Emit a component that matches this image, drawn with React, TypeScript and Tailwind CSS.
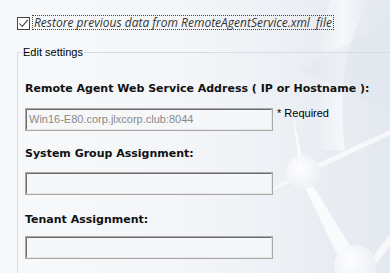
import React from "react";

const labelCls =
  "text-[11px] leading-[13px] font-bold text-[#111] whitespace-nowrap";

function Field({ value, disabled }: { value?: string; disabled?: boolean }) {
  return (
    <div className="w-[248px] h-[23px] border border-[#a9a9a9] bg-[#f6f7f9]">
      <div className="w-full h-full border-t border-l border-[#6d6d6d] border-r-[#e6e6e6] border-b-[#e6e6e6] border-r border-b flex items-center pl-[2px]">
        <span
          className={`text-[11px] leading-[13px] ${disabled ? "text-[#8a8a8a]" : "text-black"}`}
          style={{ fontFamily: '"Liberation Sans", Arial, sans-serif' }}
        >
          {value}
        </span>
      </div>
    </div>
  );
}

export default function App() {
  return (
    <div
      className="relative w-[390px] h-[273px] overflow-hidden bg-gradient-to-r from-[#f8f9fa] via-[#f3f5f8] to-[#e4e9f0]"
      style={{ fontFamily: '"DejaVu Sans", Verdana, sans-serif' }}
    >
      {/* background decoration */}
      <svg
        className="absolute inset-0 pointer-events-none"
        width="390"
        height="273"
        viewBox="0 0 390 273"
      >
        <defs>
          <radialGradient id="ball" cx="40%" cy="40%" r="60%">
            <stop offset="0%" stopColor="#ffffff" />
            <stop offset="100%" stopColor="#eef1f5" />
          </radialGradient>
          <linearGradient id="sheen" x1="0" y1="0" x2="1" y2="0">
            <stop offset="0%" stopColor="#ffffff" stopOpacity="0" />
            <stop offset="50%" stopColor="#ffffff" stopOpacity="0.6" />
            <stop offset="100%" stopColor="#ffffff" stopOpacity="0" />
          </linearGradient>
        </defs>
        <path d="M330 0 C 318 40, 312 90, 318 150 L 345 150 C 338 90, 345 40, 370 0 Z" fill="url(#sheen)" />
        <path d="M390 20 L 300 70 L 390 110 Z" fill="#dfe5ed" opacity="0.4" />
        <path d="M292 110 L 300 172 L 305 172 Z" fill="#ffffff" opacity="0.75" />
        <path d="M301 180 L 341 262 L 354 252 L 308 178 Z" fill="#ffffff" opacity="0.75" />
        <path d="M312 166 L 390 130 L 390 135 L 314 171 Z" fill="#ffffff" opacity="0.65" />
        <path d="M291 178 L 272 188 L 272 191 L 293 181 Z" fill="#ffffff" opacity="0.5" />
        <path d="M372 258 L 390 234 L 390 246 L 376 264 Z" fill="#ffffff" opacity="0.65" />
        <circle cx="303" cy="172" r="17" fill="url(#ball)" opacity="0.9" />
        <circle cx="355" cy="266" r="21" fill="url(#ball)" opacity="0.9" />
      </svg>

      <div className="relative pt-[15px] pl-[17px]">
        {/* restore checkbox */}
        <div className="flex items-start">
          <div className="mt-[2px] w-[13px] h-[13px] border border-[#444] bg-white flex items-center justify-center">
            <svg width="11" height="11" viewBox="0 0 11 11">
              <path d="M1.5 5.5 L4.2 8.5 L9.8 1.8" fill="none" stroke="#333" strokeWidth="1.1" />
            </svg>
          </div>
          <div
            className="ml-[2px] h-[15px] pl-[1px] pr-[1px] border border-dotted border-[#444] flex items-center text-[12px] italic text-[#333] whitespace-nowrap"
            style={{ fontFamily: '"Open Sans", "Noto Sans", sans-serif' }}
          >
            Restore previous data from RemoteAgentService.xml&nbsp; file
          </div>
        </div>

        {/* group box */}
        <div className="mt-[22px] border-l border-t border-[#d5dce3] h-[240px] relative">
          <span
            className="absolute -top-[7px] left-[4px] px-[1px] text-[11px] leading-[13px] text-black bg-[#f6f7f9]"
            style={{ fontFamily: '"Liberation Sans", Arial, sans-serif' }}
          >
            Edit settings
          </span>

          <div className="pl-[7px] pt-[29px] flex flex-col">
            <div className={labelCls}>
              Remote Agent Web Service Address ( IP or Hostname ):
            </div>
            <div className="mt-[13px] flex items-start">
              <Field value="Win16-E80.corp.jlxcorp.club:8044" disabled />
              <span
                className="ml-[4px] -mt-[1px] text-[11px] leading-[13px] text-black"
                style={{ fontFamily: '"Liberation Sans", Arial, sans-serif' }}
              >
                * Required
              </span>
            </div>
            <div className={`${labelCls} mt-[16px]`}>System Group Assignment:</div>
            <div className="mt-[12px]">
              <Field />
            </div>
            <div className={`${labelCls} mt-[18px]`}>Tenant Assignment:</div>
            <div className="mt-[10px]">
              <Field />
            </div>
          </div>
        </div>
      </div>
    </div>
  );
}
